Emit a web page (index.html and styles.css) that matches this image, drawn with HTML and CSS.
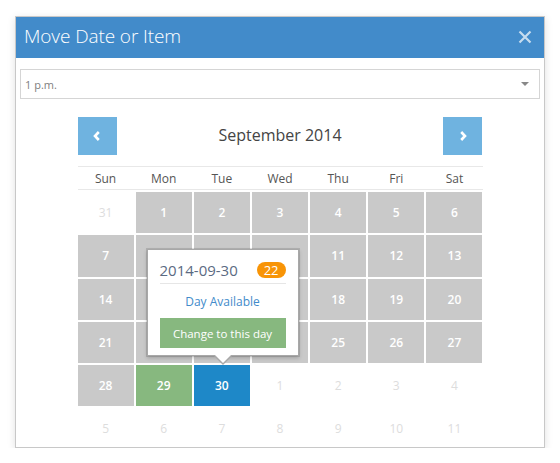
FILE: index.html
```html
<!DOCTYPE html>
<html>
<head>
<meta charset="utf-8">
<link rel="stylesheet" href="styles.css">
</head>
<body>
<div class="modal">
  <div class="modal-header">
    <h3 class="modal-title">Move Date or Item</h3>
    <svg class="close" width="14" height="14" viewBox="0 0 14 14"><path d="M1.5 1.5 L12.5 12.5 M12.5 1.5 L1.5 12.5" stroke="#fff" stroke-width="2.2" stroke-linecap="butt"/></svg>
  </div>
  <div class="modal-body">
    <div class="select"><span>1 p.m.</span><i class="caret"></i></div>
    <div class="calendar">
      <div class="cal-head">
        <div class="nav-btn"><svg width="12" height="12" viewBox="0 0 12 12"><path d="M7.8 2 L4 6 L7.8 10" fill="none" stroke="#fff" stroke-width="2.6"/></svg></div>
        <div class="cal-title">September 2014</div>
        <div class="nav-btn"><svg width="12" height="12" viewBox="0 0 12 12"><path d="M4.2 2 L8 6 L4.2 10" fill="none" stroke="#fff" stroke-width="2.6"/></svg></div>
      </div>
      <div class="dow">
        <span>Sun</span><span>Mon</span><span>Tue</span><span>Wed</span><span>Thu</span><span>Fri</span><span>Sat</span>
      </div>
      <div class="days">
        <span class="other">31</span><span class="busy">1</span><span class="busy">2</span><span class="busy">3</span><span class="busy">4</span><span class="busy">5</span><span class="busy">6</span>
        <span class="busy">7</span><span class="busy">8</span><span class="busy">9</span><span class="busy">10</span><span class="busy">11</span><span class="busy">12</span><span class="busy">13</span>
        <span class="busy">14</span><span class="busy">15</span><span class="busy">16</span><span class="busy">17</span><span class="busy">18</span><span class="busy">19</span><span class="busy">20</span>
        <span class="busy">21</span><span class="busy">22</span><span class="busy">23</span><span class="busy">24</span><span class="busy">25</span><span class="busy">26</span><span class="busy">27</span>
        <span class="busy">28</span><span class="today">29</span><span class="active">30</span><span class="other">1</span><span class="other">2</span><span class="other">3</span><span class="other">4</span>
        <span class="other">5</span><span class="other">6</span><span class="other">7</span><span class="other">8</span><span class="other">9</span><span class="other">10</span><span class="other">11</span>
        <div class="popover">
          <div class="pop-head"><span class="pop-date">2014-09-30</span><span class="badge">22</span></div>
          <div class="pop-status">Day Available</div>
          <button class="pop-btn">Change to this day</button>
        </div>
      </div>
    </div>
  </div>
</div>
</body>
</html>
```
FILE: styles.css
```css
* { box-sizing: border-box; }
body {
  margin: 0;
  background: #fff;
  font-family: "Open Sans", "Liberation Sans", sans-serif;
}
.modal {
  margin: 16px 0 0 15px;
  width: 530px;
  height: 432px;
  border: 1px solid #c8c8c8;
  box-shadow: 0 2px 8px rgba(0,0,0,0.12);
  background: #fff;
  overflow: hidden;
}
.modal-header {
  height: 41px;
  background: #428bca;
  display: flex;
  align-items: center;
  justify-content: space-between;
  padding: 0 12px 3px 8px;
}
.modal-title {
  margin: 0;
  color: #fff;
  font-size: 19px;
  font-weight: 300;
  letter-spacing: -0.1px;
}
.close { opacity: 0.7; margin-top: 2px; }
.modal-body {
  padding: 11px 4px 0 4px;
}
.select {
  height: 30px;
  border: 1px solid #d5d5d5;
  display: flex;
  align-items: center;
  justify-content: space-between;
  padding: 0 10px 0 4px;
  font-size: 11px;
  color: #808080;
}
.caret {
  width: 0; height: 0;
  border-left: 4px solid transparent;
  border-right: 4px solid transparent;
  border-top: 4px solid #888;
}
.calendar {
  width: 405px;
  margin: 18px auto 0;
}
.cal-head {
  display: flex;
  align-items: center;
  justify-content: space-between;
  height: 38px;
}
.nav-btn {
  width: 39px;
  height: 38px;
  background: #6fb3e0;
  display: flex;
  align-items: center;
  justify-content: center;
}
.cal-title {
  font-size: 16px;
  color: #444;
  margin-top: -3px;
}
.dow {
  margin-top: 11px;
  border-top: 1px solid #e8e8e8;
  border-bottom: 1px solid #e8e8e8;
  display: grid;
  grid-template-columns: repeat(7, 1fr);
  column-gap: 2px;
  height: 24px;
  align-items: center;
  font-size: 12px;
  color: #555;
  text-align: center;
}
.days {
  position: relative;
  margin-top: 2px;
  display: grid;
  grid-template-columns: repeat(7, 1fr);
  grid-auto-rows: 41.25px;
  gap: 2px;
  font-size: 12px;
  font-weight: 400;
}
.days span {
  display: flex;
  align-items: center;
  justify-content: center;
}
.days .other { color: #ddd; }
.days .busy { background: #c9c9c9; color: #fff; font-weight: 600; }
.days .today { background: #87b87f; color: #fff; font-weight: 600; }
.days .active { background: #1e88c8; color: #fff; font-weight: 600; }
.popover {
  position: absolute;
  left: 69px;
  top: 57px;
  width: 152px;
  height: 107px;
  background: #fff;
  border: 1px solid #a8a8a8;
  box-shadow: 0 0 0 1px rgba(0,0,0,0.12), 0 2px 4px rgba(0,0,0,0.2);
  padding: 10px 12px 0 12px;
  font-weight: 400;
}
.popover::after, .popover::before {
  content: "";
  position: absolute;
  left: 66px;
  width: 0; height: 0;
  border-left: 9px solid transparent;
  border-right: 9px solid transparent;
}
.popover::before {
  bottom: -10px;
  left: 65px;
  border-left-width: 10px;
  border-right-width: 10px;
  border-top: 10px solid #a8a8a8;
}
.popover::after {
  bottom: -8px;
  border-top: 9px solid #fff;
}
.pop-head {
  display: flex;
  align-items: center;
  justify-content: space-between;
  border-bottom: 1px solid #e6e6e6;
  padding-bottom: 3px;
}
.pop-date {
  font-size: 15px;
  color: #5b6a82;
}
.badge {
  background: #f89406;
  color: #fff;
  font-size: 13px;
  line-height: 16px;
  padding: 0 7px;
  border-radius: 8px;
}
.pop-status {
  text-align: center;
  color: #428bca;
  font-size: 12px;
  margin-top: 9px;
}
.pop-btn {
  display: block;
  width: 100%;
  height: 30px;
  margin-top: 8px;
  border: 0;
  background: #87b87f;
  color: #fff;
  font-family: "Open Sans", "Liberation Sans", sans-serif;
  font-size: 11.5px;
  padding: 0;
}
```
